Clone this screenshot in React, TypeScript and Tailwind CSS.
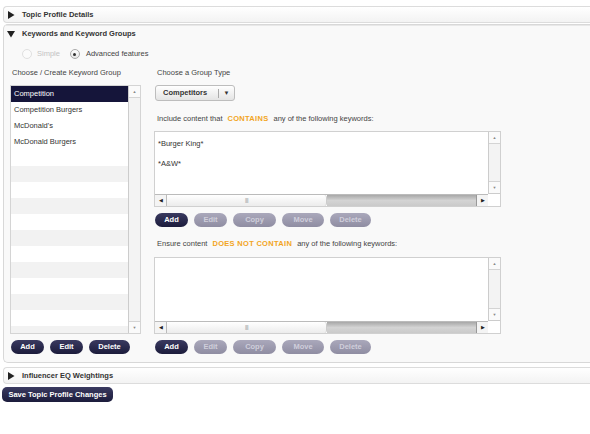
import type { ReactNode } from "react";

function Btn({ label, off, w }: { label: string; off?: boolean; w: string }) {
  return (
    <span
      className={`flex h-[14px] items-center justify-center rounded-full text-[7.5px] font-bold ${w} ${
        off
          ? "bg-gradient-to-b from-[#aaa8bb] to-[#8f8da2] text-[#cfcedb]"
          : "bg-gradient-to-b from-[#3a3a60] to-[#1c1c3c] text-white"
      }`}
    >
      {label}
    </span>
  );
}

function PanelHeader({ title, open }: { title: string; open?: boolean }) {
  return (
    <div className="flex h-[15px] items-center gap-[7px] pl-[3px] text-[7.5px] font-bold text-[#333]">
      <svg width="8" height="8" viewBox="0 0 8 8" className="shrink-0">
        {open ? <polygon points="0,1 8,1 4,7.5" fill="#222" /> : <polygon points="1,0 7.5,4 1,8" fill="#222" />}
      </svg>
      {title}
    </div>
  );
}

function HScroll() {
  return (
    <div className="flex h-[12px] border-t border-[#bbb]">
      <span className="flex w-[12px] items-center justify-center border-r border-[#bbb] bg-[#f4f4f4] text-[5px] text-[#222]">
        ◀
      </span>
      <span className="flex w-[160px] items-center justify-center rounded-r-[3px] border-r border-[#ccc] bg-gradient-to-b from-white to-[#ececec] text-[5px] tracking-[-0.5px] text-[#999]">
        ||||
      </span>
      <span className="flex-1 bg-gradient-to-b from-[#a8a8a8] via-[#d4d4d4] to-[#cacaca]" />
      <span className="flex w-[12px] items-center justify-center border-l border-[#999] bg-[#f4f4f4] text-[5px] text-[#222]">
        ▶
      </span>
    </div>
  );
}

function VScroll({ className = "" }: { className?: string }) {
  return (
    <div className={`flex w-[12px] flex-col border-l border-[#ccc] bg-[#f3f3f3] ${className}`}>
      <span className="flex h-[12px] items-center justify-center border-b border-[#d4d4d4] bg-[#fafafa] text-[4px] text-[#888]">
        ▲
      </span>
      <span className="flex-1" />
      <span className="flex h-[12px] items-center justify-center border-t border-[#d4d4d4] bg-[#fafafa] text-[4px] text-[#888]">
        ▼
      </span>
    </div>
  );
}

function KeywordBox({ h, children }: { h: string; children?: ReactNode }) {
  return (
    <div className={`flex w-[347px] flex-col border border-[#d0d0d0] bg-white ${h}`}>
      <div className="flex flex-1">
        <div className="flex-1 px-[3px] pt-[2px] text-[7.5px] leading-[20px] text-[#333]">{children}</div>
        <VScroll className="border-b" />
      </div>
      <div className="flex">
        <div className="flex-1">
          <HScroll />
        </div>
        <span className="w-[12px] bg-white" />
      </div>
    </div>
  );
}

function ButtonRow() {
  return (
    <div className="mt-[6px] flex gap-[6px] pl-[1px]">
      <Btn label="Add" w="w-[33px]" />
      <Btn label="Edit" off w="w-[33px]" />
      <Btn label="Copy" off w="w-[43px]" />
      <Btn label="Move" off w="w-[42px]" />
      <Btn label="Delete" off w="w-[41px]" />
    </div>
  );
}

const groups = ["Competition", "Competition Burgers", "McDonald's", "McDonald Burgers"];

export default function App() {
  return (
    <div className="h-[434px] w-[590px] overflow-hidden bg-white pt-[6px] font-['Liberation_Sans',Arial,sans-serif]">
      <div className="ml-[3px] h-[17px] rounded-l-[4px] border border-r-0 border-[#dcdcdc] bg-gradient-to-b from-white to-[#f3f3f3]">
        <PanelHeader title="Topic Profile Details" />
      </div>

      <div className="ml-[3px] mt-[1px] rounded-l-[5px] border border-r-0 border-[#d8d8d8] bg-[#f9f9f9] pb-[8px]">
        <div className="border-t border-[#e8e8e8]">
          <PanelHeader title="Keywords and Keyword Groups" open />
        </div>

        <div className="mt-[8px] flex h-[10px] items-center pl-[18px] text-[7.5px]">
          <span className="h-[10px] w-[10px] rounded-full border border-[#e0e0e0] bg-[#fbfbfb]" />
          <span className="ml-[5px] text-[#c4c4c4]">Simple</span>
          <span className="ml-[10px] flex h-[10px] w-[10px] items-center justify-center rounded-full border border-[#aaa] bg-gradient-to-b from-white to-[#e6e6e6]">
            <span className="h-[3px] w-[3px] rounded-full bg-[#333]" />
          </span>
          <span className="ml-[6px] text-[#444]">Advanced features</span>
        </div>

        <div className="mt-[9px] flex">
          <div className="ml-[6px] flex w-[131px] flex-col">
            <div className="flex h-[10px] items-center pl-[2px] text-[7.5px] text-[#444]">
              Choose / Create Keyword Group
            </div>
            <div className="mt-[7px] flex h-[249px] border border-[#d4d4d4] bg-white">
              <div className="flex-1 overflow-hidden">
                {Array.from({ length: 16 }, (_, i) => (
                  <div
                    key={i}
                    className={`flex h-[16px] items-center pl-[3px] text-[7.5px] ${
                      i === 0
                        ? "bg-[#15153a] text-white"
                        : i >= 4 && i % 2 === 1
                          ? "bg-[#f2f2f2] text-[#333]"
                          : "bg-white text-[#333]"
                    }`}
                  >
                    {groups[i] ?? ""}
                  </div>
                ))}
              </div>
              <VScroll />
            </div>
            <div className="mt-[6px] flex gap-[6px] pl-[1px]">
              <Btn label="Add" w="w-[33px]" />
              <Btn label="Edit" w="w-[33px]" />
              <Btn label="Delete" w="w-[41px]" />
            </div>
          </div>

          <div className="ml-[13px] flex flex-col">
            <div className="flex h-[10px] items-center pl-[3px] text-[7.5px] text-[#444]">
              Choose a Group Type
            </div>
            <div className="ml-[1px] mt-[7px] flex h-[16px] w-[80px] items-center rounded-[3px] border border-[#bdbdbd] bg-gradient-to-b from-white to-[#e4e4e4] text-[7.5px] font-bold text-[#333]">
              <span className="flex-1 pl-[7px]">Competitors</span>
              <span className="h-[9px] border-l border-[#aaa]" />
              <span className="w-[15px] text-center text-[6px]">▼</span>
            </div>

            <div className="mt-[13px] flex h-[10px] items-center pl-[3px] text-[7.5px] text-[#444]">
              Include content that
              <span className="mx-[5px] font-bold tracking-[0.3px] text-[#f2a51e]">CONTAINS</span>
              any of the following keywords:
            </div>
            <div className="mt-[7px]">
              <KeywordBox h="h-[76px]">
                <div>*Burger King*</div>
                <div>*A&amp;W*</div>
              </KeywordBox>
            </div>
            <ButtonRow />

            <div className="mt-[12px] flex h-[10px] items-center pl-[3px] text-[7.5px] text-[#444]">
              Ensure content
              <span className="mx-[5px] font-bold tracking-[0.3px] text-[#f2a51e]">DOES NOT CONTAIN</span>
              any of the following keywords:
            </div>
            <div className="mt-[8px]">
              <KeywordBox h="h-[77px]" />
            </div>
            <ButtonRow />
          </div>
        </div>
      </div>

      <div className="ml-[3px] mt-[4px] h-[17px] rounded-l-[4px] border border-r-0 border-[#dcdcdc] bg-gradient-to-b from-white to-[#f3f3f3]">
        <PanelHeader title="Influencer EQ Weightings" />
      </div>

      <div className="ml-[2px] mt-[3px] flex h-[15px] w-[111px] items-center justify-center rounded-[5px] bg-gradient-to-b from-[#3a3a60] to-[#1c1c3c] text-[7.5px] font-bold text-white">
        Save Topic Profile Changes
      </div>
    </div>
  );
}
